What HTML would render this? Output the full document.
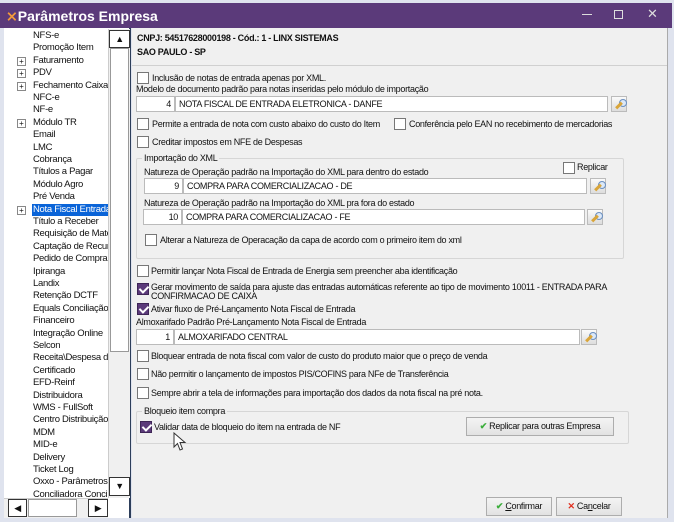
<!DOCTYPE html>
<html><head><meta charset="utf-8"><style>
*{margin:0;padding:0;box-sizing:border-box}
body{width:674px;height:522px;background:#dfe3ee;font-family:"Liberation Sans",sans-serif;font-size:9px;letter-spacing:-0.3px;color:#111;position:relative;overflow:hidden}
.a{position:absolute;white-space:nowrap}
.t{position:absolute;white-space:nowrap;line-height:11px}
.cb{position:absolute;width:12px;height:12px;background:#fff;border:1px solid #777}
.ck{position:absolute;width:12px;height:12px;background:#5b3a7a;border:1px solid #3e2556}
.ck:after{content:"";position:absolute;left:3px;top:0px;width:4px;height:7px;border:solid #fff;border-width:0 2px 2px 0;transform:rotate(45deg)}
.in{position:absolute;background:#fff;border:1px solid #bbb;height:16px;line-height:14px;padding:0 3px}
.lk{position:absolute;width:16px;height:16px;border:1px solid #bbb;background:linear-gradient(#fafafa,#ddd)}
.lk:after{content:"";position:absolute;left:3px;top:7px;width:8px;height:3px;background:#d9a53a;transform:rotate(-45deg)}
.lk:before{content:"";position:absolute;left:7px;top:2px;width:6px;height:6px;border-radius:50%;border:1px solid #6a8fc0;background:#dbe8f8}
.grp{position:absolute;border:1px solid #d6d6d6;border-radius:2px}
.gl{position:absolute;background:#f0f0f0;padding:0 2px;line-height:11px}
.btn{position:absolute;border:1px solid #adadad;background:linear-gradient(#f4f4f4,#e2e2e2);text-align:center;line-height:16px}
.li{position:absolute;left:29px;line-height:12px;white-space:nowrap;font-size:9.5px}
.pl{position:absolute;left:13px;width:9px;height:9px;border:1px solid #888;background:#fff;font-size:8px;line-height:7px;text-align:center;letter-spacing:0}
</style></head><body>
<div class="a" style="left:0;top:3px;width:672px;height:25px;background:#5b3a7a"></div>
<div class="a" style="left:6px;top:7px;color:#fff;font-size:14px;font-weight:bold;line-height:18px;letter-spacing:0"><span style="color:#f39a3a">⨯</span>Parâmetros Empresa</div>
<div class="a" style="left:582px;top:14px;width:10px;height:1px;background:#ddd"></div>
<div class="a" style="left:614px;top:10px;width:9px;height:9px;border:1px solid #ddd"></div>
<div class="a" style="left:647px;top:6px;color:#ddd;font-size:13px">✕</div>
<!-- left tree -->
<div class="a" style="left:4px;top:28px;width:127px;height:490px;background:#fff;border-right:2px solid #2d3e5a"></div>
<div style="position:absolute;left:4px;top:29px;width:104px;height:468px;overflow:hidden">
<div style="position:relative;top:1px">
<div class="li" style="top:0">NFS-e</div>
<div class="li" style="top:12.4px">Promoção Item</div>
<div class="pl" style="top:27px">+</div><div class="li" style="top:24.8px">Faturamento</div>
<div class="pl" style="top:39px">+</div><div class="li" style="top:37.2px">PDV</div>
<div class="pl" style="top:52px">+</div><div class="li" style="top:49.6px">Fechamento Caixa</div>
<div class="li" style="top:62px">NFC-e</div>
<div class="li" style="top:74.4px">NF-e</div>
<div class="pl" style="top:89px">+</div><div class="li" style="top:86.8px">Módulo TR</div>
<div class="li" style="top:99.2px">Email</div>
<div class="li" style="top:111.6px">LMC</div>
<div class="li" style="top:124px">Cobrança</div>
<div class="li" style="top:136.4px">Títulos a Pagar</div>
<div class="li" style="top:148.8px">Módulo Agro</div>
<div class="li" style="top:161.2px">Pré Venda</div>
<div class="pl" style="top:176px">+</div><div class="li" style="top:173.6px;background:#0a64d8;color:#fff;padding:0 1px;left:28px">Nota Fiscal Entrada</div>
<div class="li" style="top:186px">Título a Receber</div>
<div class="li" style="top:198.4px">Requisição de Materiais</div>
<div class="li" style="top:210.8px">Captação de Recursos</div>
<div class="li" style="top:223.2px">Pedido de Compra</div>
<div class="li" style="top:235.6px">Ipiranga</div>
<div class="li" style="top:248px">Landix</div>
<div class="li" style="top:260.4px">Retenção DCTF</div>
<div class="li" style="top:272.8px">Equals Conciliação</div>
<div class="li" style="top:285.2px">Financeiro</div>
<div class="li" style="top:297.6px">Integração Online</div>
<div class="li" style="top:310px">Selcon</div>
<div class="li" style="top:322.4px">Receita\Despesa de Terceiros</div>
<div class="li" style="top:334.8px">Certificado</div>
<div class="li" style="top:347.2px">EFD-Reinf</div>
<div class="li" style="top:359.6px">Distribuidora</div>
<div class="li" style="top:372px">WMS - FullSoft</div>
<div class="li" style="top:384.4px">Centro Distribuição</div>
<div class="li" style="top:396.8px">MDM</div>
<div class="li" style="top:409.2px">MID-e</div>
<div class="li" style="top:421.6px">Delivery</div>
<div class="li" style="top:434px">Ticket Log</div>
<div class="li" style="top:446.4px">Oxxo - Parâmetros</div>
<div class="li" style="top:458.8px">Conciliadora Conciliação</div>
</div></div>
<!-- v scrollbar -->
<div class="a" style="left:108px;top:29px;width:22px;height:469px;background:#f0f0f0;border-left:1px solid #ccc"></div>
<div class="a" style="left:109px;top:30px;width:21px;height:18px;background:#fff;border:1px solid #333;text-align:center;font-size:9px;line-height:16px">▲</div>
<div class="a" style="left:110px;top:48px;width:19px;height:304px;background:#fff;border:1px solid #999"></div>
<div class="a" style="left:109px;top:477px;width:21px;height:19px;background:#fff;border:1px solid #333;text-align:center;font-size:9px;line-height:17px">▼</div>
<!-- h scrollbar -->
<div class="a" style="left:4px;top:498px;width:104px;height:20px;background:#f0f0f0;border-top:1px solid #ccc"></div>
<div class="a" style="left:8px;top:499px;width:19px;height:18px;background:#fff;border:1px solid #333;text-align:center;font-size:9px;line-height:16px">◀</div>
<div class="a" style="left:28px;top:499px;width:49px;height:18px;background:#fff;border:1px solid #999"></div>
<div class="a" style="left:88px;top:499px;width:20px;height:18px;background:#fff;border:1px solid #333;text-align:center;font-size:9px;line-height:16px">▶</div>
<!-- right panel -->
<div class="a" style="left:132px;top:28px;width:536px;height:490px;background:#f0f0f0;border-right:1px solid #aaa"></div>
<div class="a" style="left:132px;top:65px;width:535px;height:1px;background:#d0d0d0"></div>
<div class="t" style="left:137px;top:33px;font-weight:bold">CNPJ: 54517628000198 - Cód.: 1 - LINX SISTEMAS</div>
<div class="t" style="left:137px;top:47px;font-weight:bold">SAO PAULO - SP</div>

<div class="cb" style="left:137px;top:72px"></div><div class="t" style="left:152px;top:73px">Inclusão de notas de entrada apenas por XML.</div>
<div class="t" style="left:136px;top:84px">Modelo de documento padrão para notas inseridas pelo módulo de importação</div>
<div class="in" style="left:136px;top:96px;width:39px;text-align:right">4</div>
<div class="in" style="left:175px;top:96px;width:433px">NOTA FISCAL DE ENTRADA ELETRONICA - DANFE</div>
<div class="lk" style="left:611px;top:96px"></div>
<div class="cb" style="left:137px;top:118px"></div><div class="t" style="left:152px;top:119px">Permite a entrada de nota com custo abaixo do custo do Item</div>
<div class="cb" style="left:394px;top:118px"></div><div class="t" style="left:409px;top:119px">Conferência pelo EAN no recebimento de mercadorias</div>
<div class="cb" style="left:137px;top:136px"></div><div class="t" style="left:152px;top:137px">Creditar impostos em NFE de Despesas</div>

<div class="grp" style="left:136px;top:158px;width:488px;height:101px"></div>
<div class="gl" style="left:142px;top:153px">Importação do XML</div>
<div class="cb" style="left:563px;top:162px"></div><div class="t" style="left:577px;top:162px">Replicar</div>
<div class="t" style="left:144px;top:167px">Natureza de Operação padrão na Importação do XML para dentro do estado</div>
<div class="in" style="left:144px;top:178px;width:39px;text-align:right">9</div>
<div class="in" style="left:183px;top:178px;width:404px">COMPRA PARA COMERCIALIZACAO - DE</div>
<div class="lk" style="left:590px;top:178px"></div>
<div class="t" style="left:144px;top:198px">Natureza de Operação padrão na Importação do XML pra fora do estado</div>
<div class="in" style="left:143px;top:209px;width:39px;text-align:right">10</div>
<div class="in" style="left:182px;top:209px;width:403px">COMPRA PARA COMERCIALIZACAO - FE</div>
<div class="lk" style="left:587px;top:209px"></div>
<div class="cb" style="left:145px;top:234px"></div><div class="t" style="left:160px;top:235px">Alterar a Natureza de Operacação da capa de acordo com o primeiro item do xml</div>

<div class="cb" style="left:137px;top:265px"></div><div class="t" style="left:151px;top:266px">Permitir lançar Nota Fiscal de Entrada de Energia sem preencher aba identificação</div>
<div class="ck" style="left:137px;top:283px"></div><div class="t" style="left:151px;top:282px">Gerar movimento de saída para ajuste das entradas automáticas referente ao tipo de movimento 10011 - ENTRADA PARA</div>
<div class="t" style="left:151px;top:291px">CONFIRMACAO DE CAIXA</div>
<div class="ck" style="left:137px;top:303px"></div><div class="t" style="left:151px;top:304px">Ativar fluxo de Pré-Lançamento Nota Fiscal de Entrada</div>
<div class="t" style="left:136px;top:317px">Almoxarifado Padrão Pré-Lançamento Nota Fiscal de Entrada</div>
<div class="in" style="left:136px;top:329px;width:38px;text-align:right">1</div>
<div class="in" style="left:174px;top:329px;width:406px">ALMOXARIFADO CENTRAL</div>
<div class="lk" style="left:581px;top:329px"></div>
<div class="cb" style="left:137px;top:350px"></div><div class="t" style="left:151px;top:351px">Bloquear entrada de nota fiscal com valor de custo do produto maior que o preço de venda</div>
<div class="cb" style="left:137px;top:368px"></div><div class="t" style="left:151px;top:369px">Não permitir o lançamento de impostos PIS/COFINS para NFe de Transferência</div>
<div class="cb" style="left:137px;top:387px"></div><div class="t" style="left:151px;top:388px">Sempre abrir a tela de informações para importação dos dados da nota fiscal na pré nota.</div>

<div class="grp" style="left:136px;top:411px;width:493px;height:33px"></div>
<div class="gl" style="left:142px;top:406px">Bloqueio item compra</div>
<div class="ck" style="left:140px;top:421px"></div><div class="t" style="left:154px;top:422px">Validar data de bloqueio do item na entrada de NF</div>
<div class="btn" style="left:466px;top:417px;width:148px;height:19px"><span style="color:#3cae3c;font-weight:bold">✔</span> Replicar para outras Empresa</div>
<svg class="a" style="left:173px;top:432px" width="14" height="20" viewBox="0 0 14 20"><path d="M1 1 L1 15 L4.5 11.5 L7 18 L9.5 17 L7 10.5 L12 10.5 Z" fill="#fff" stroke="#333" stroke-width="1"/></svg>

<div class="btn" style="left:486px;top:497px;width:66px;height:19px"><span style="color:#3cae3c;font-weight:bold">✔</span> <u>C</u>onfirmar</div>
<div class="btn" style="left:556px;top:497px;width:66px;height:19px"><span style="color:#e03020;font-weight:bold">✕</span> Ca<u>n</u>celar</div>
</body></html>
